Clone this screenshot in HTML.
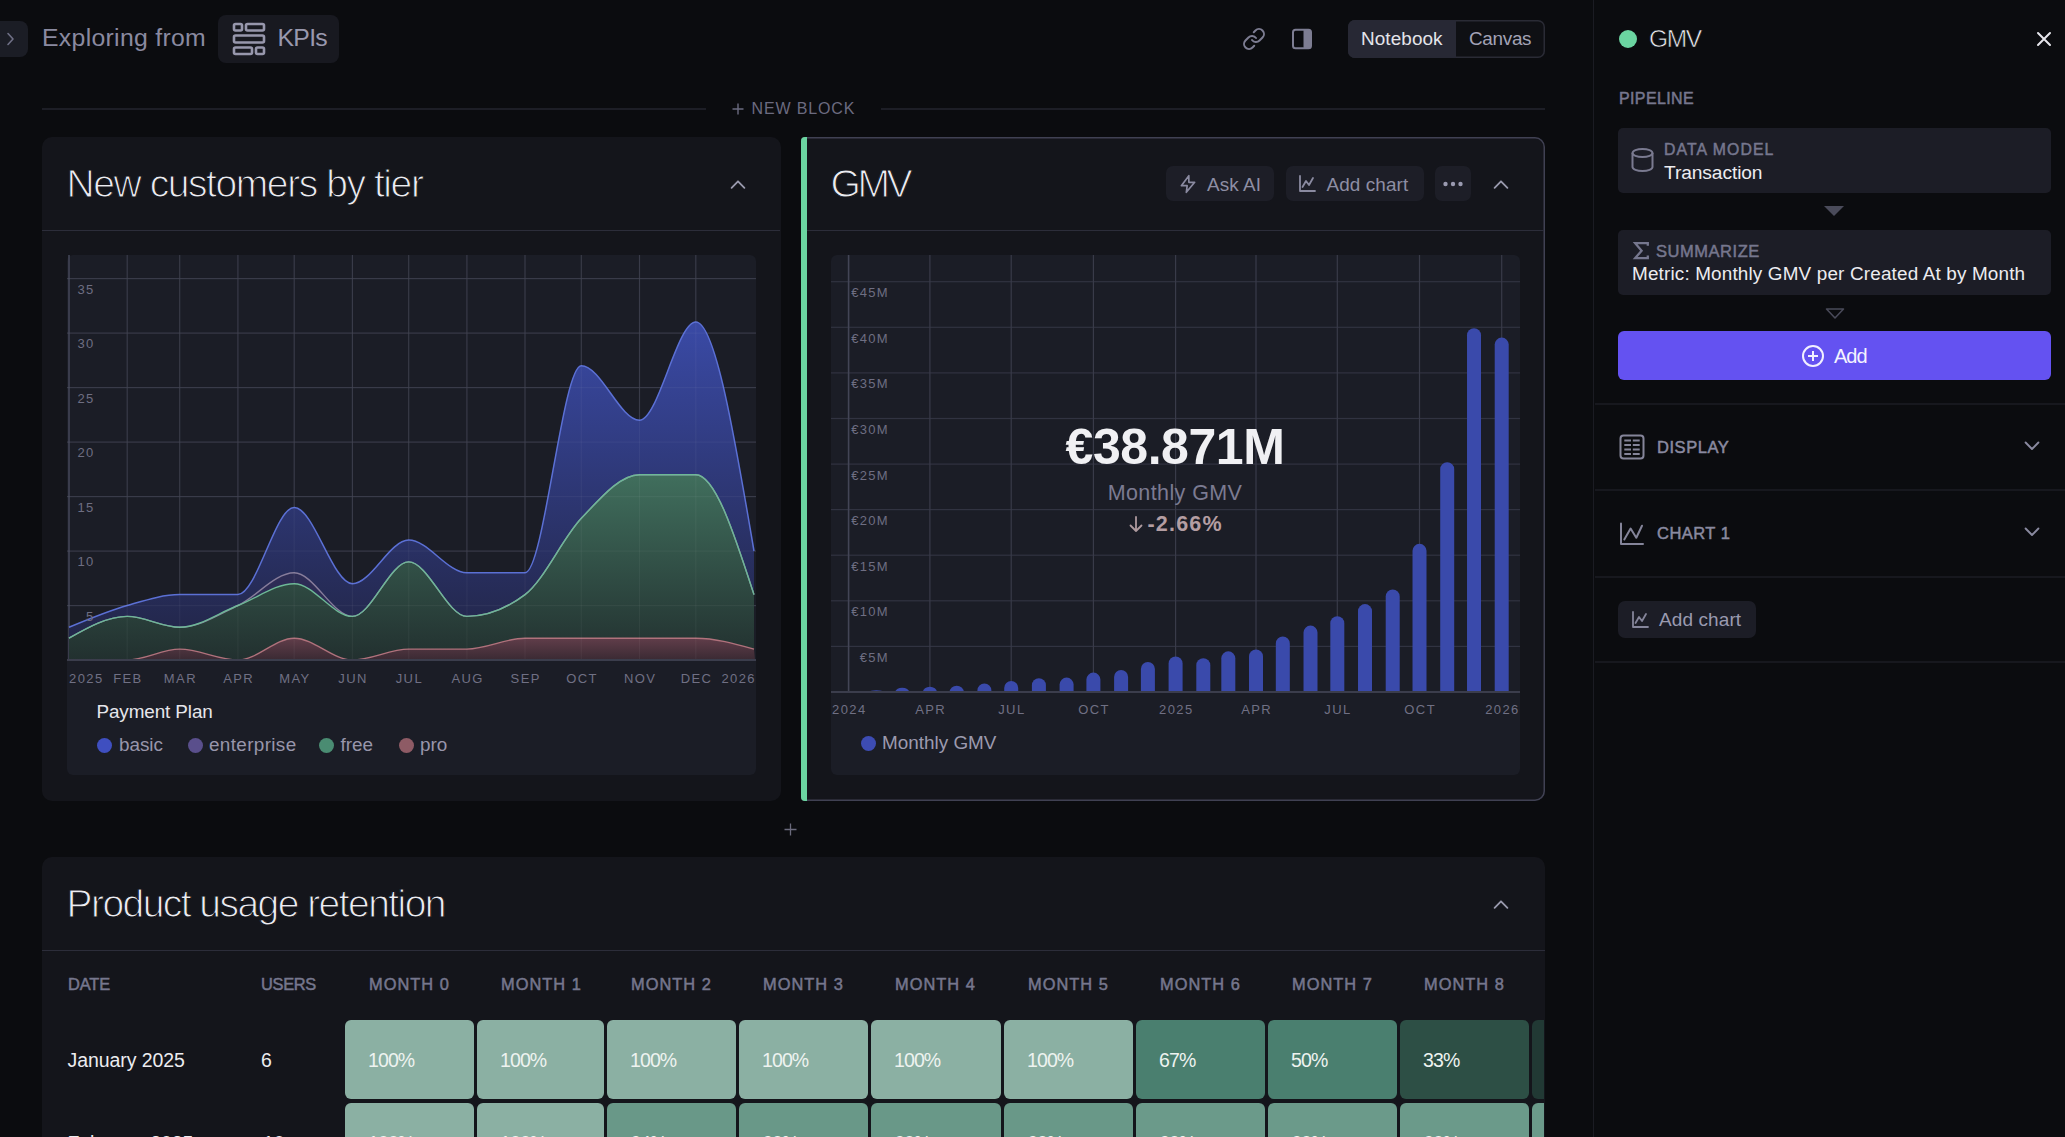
<!DOCTYPE html>
<html><head><meta charset="utf-8"><style>
html,body{margin:0;padding:0;}
body{width:2065px;height:1137px;overflow:hidden;background:#0b0c0f;position:relative;font-family:"Liberation Sans", sans-serif;}
.t{position:absolute;white-space:nowrap;line-height:1;}
.r{position:absolute;}
</style></head><body>
<div class="r" style="left:0px;top:21px;width:28px;height:36px;background:#1b1d25;border-radius:0 8px 8px 0;"></div>
<svg class="r" style="left:2px;top:30px" width="16" height="18" viewBox="0 0 16 18"><path d="M6 3.5 L11 9 L6 14.5" fill="none" stroke="#6f7086" stroke-width="1.6" stroke-linecap="round" stroke-linejoin="round"/></svg>
<div class="t" style="left:42.0px;top:26.1px;font-size:24.8px;color:#8a8aa0;letter-spacing:0.3px;">Exploring from</div>
<div class="r" style="left:218px;top:15px;width:121px;height:48px;background:#181920;border-radius:8px;"></div>
<svg class="r" style="left:231px;top:21px" width="36" height="36" viewBox="0 0 36 36" fill="none" stroke="#9797ac" stroke-width="2.6"><rect x="3" y="3" width="8" height="6.5" rx="1.5"/><rect x="15" y="3" width="18" height="6.5" rx="1.5"/><rect x="3" y="14.5" width="30" height="7" rx="1.5"/><rect x="3" y="26.5" width="18" height="6.5" rx="1.5"/><rect x="25" y="26.5" width="8" height="6.5" rx="1.5"/></svg>
<div class="t" style="left:277.5px;top:26.1px;font-size:24.8px;color:#9898ae;letter-spacing:-0.7px;">KPIs</div>
<svg class="r" style="left:1242px;top:27px" width="24" height="24" viewBox="0 0 24 24" fill="none" stroke="#7d7d92" stroke-width="2" stroke-linecap="round" stroke-linejoin="round"><path d="M10 13a5 5 0 0 0 7.54.54l3-3a5 5 0 0 0-7.07-7.07l-1.72 1.71"/><path d="M14 11a5 5 0 0 0-7.54-.54l-3 3a5 5 0 0 0 7.07 7.07l1.71-1.71"/></svg>
<svg class="r" style="left:1291px;top:28px" width="22" height="22" viewBox="0 0 22 22"><rect x="2" y="1.8" width="18" height="18.4" rx="2.5" fill="none" stroke="#7d7d92" stroke-width="2"/><rect x="12.5" y="1.8" width="7.5" height="18.4" rx="1" fill="#7d7d92"/></svg>
<div class="r" style="left:1348px;top:20px;width:197px;height:38px;background:#0f1014;border-radius:7px;box-shadow:inset 0 0 0 1.5px #2a2b35;"></div>
<div class="r" style="left:1348px;top:20px;width:108px;height:38px;background:#272834;border-radius:7px 0 0 7px;"></div>
<div class="t" style="left:1361.0px;top:30.0px;font-size:18.9px;color:#e4e4ea;letter-spacing:0.1px;">Notebook</div>
<div class="t" style="left:1469.0px;top:30.0px;font-size:18.9px;color:#a3a3b6;letter-spacing:-0.3px;">Canvas</div>
<div class="r" style="left:42px;top:108px;width:664px;height:2px;background:#1d1e26;border-radius:0;"></div>
<div class="r" style="left:881px;top:108px;width:664px;height:2px;background:#1d1e26;border-radius:0;"></div>
<svg class="r" style="left:732px;top:103px" width="12" height="12" viewBox="0 0 12 12"><path d="M6 0.5 V11.5 M0.5 6 H11.5" stroke="#6b6b80" stroke-width="1.4"/></svg>
<div class="t" style="left:751.5px;top:100.5px;font-size:16.0px;color:#6b6b80;letter-spacing:0.85px;">NEW BLOCK</div>
<div class="r" style="left:42px;top:137px;width:739px;height:664px;background:#14151b;border-radius:10px;"></div>
<div class="r" style="left:42px;top:229.5px;width:738px;height:1.5px;background:#2c2d3a;border-radius:0;"></div>
<div class="t" style="left:66.5px;top:163.8px;font-size:39.0px;color:#ececf1;letter-spacing:-1.42px;-webkit-text-stroke:1.1px #14151b;">New customers by tier</div>
<svg class="r" style="left:728px;top:176px" width="20" height="16" viewBox="0 0 20 16"><path d="M3.6 11.8 L10 5.3 L16.4 11.8" fill="none" stroke="#9a9aae" stroke-width="1.8" stroke-linecap="round" stroke-linejoin="round"/></svg>
<div class="r" style="left:67px;top:255px;width:689px;height:520px;background:#1b1d26;border-radius:6px;"></div>
<svg class="r" style="left:0;top:0" width="800" height="800"><defs><linearGradient id="gb" gradientUnits="userSpaceOnUse" x1="0" y1="320" x2="0" y2="660"><stop offset="0" stop-color="#3a4aa6"/><stop offset="1" stop-color="#212443"/></linearGradient><linearGradient id="gg" gradientUnits="userSpaceOnUse" x1="0" y1="470" x2="0" y2="660"><stop offset="0" stop-color="#41705e"/><stop offset="1" stop-color="#22302f"/></linearGradient><linearGradient id="gr" gradientUnits="userSpaceOnUse" x1="0" y1="635" x2="0" y2="660"><stop offset="0" stop-color="#66404d"/><stop offset="1" stop-color="#3a2a33"/></linearGradient></defs><rect x="67" y="605.0" width="689" height="1.2" fill="#313341"/><rect x="67" y="550.5" width="689" height="1.2" fill="#313341"/><rect x="67" y="496.0" width="689" height="1.2" fill="#313341"/><rect x="67" y="441.5" width="689" height="1.2" fill="#313341"/><rect x="67" y="387.0" width="689" height="1.2" fill="#313341"/><rect x="67" y="332.5" width="689" height="1.2" fill="#313341"/><rect x="67" y="278.0" width="689" height="1.2" fill="#313341"/><rect x="126.6" y="255" width="1.2" height="405" fill="#313341"/><rect x="179.1" y="255" width="1.2" height="405" fill="#313341"/><rect x="237.3" y="255" width="1.2" height="405" fill="#313341"/><rect x="293.6" y="255" width="1.2" height="405" fill="#313341"/><rect x="351.8" y="255" width="1.2" height="405" fill="#313341"/><rect x="408.1" y="255" width="1.2" height="405" fill="#313341"/><rect x="466.3" y="255" width="1.2" height="405" fill="#313341"/><rect x="524.4" y="255" width="1.2" height="405" fill="#313341"/><rect x="580.7" y="255" width="1.2" height="405" fill="#313341"/><rect x="638.9" y="255" width="1.2" height="405" fill="#313341"/><rect x="695.2" y="255" width="1.2" height="405" fill="#313341"/><rect x="68.2" y="255" width="1.6" height="405" fill="#434556"/><path d="M69.00,627.30C88.39,619.18 107.79,611.06 127.18,605.50C144.69,600.48 162.21,594.60 179.73,594.60C199.12,594.60 218.51,594.60 237.90,594.60C256.67,594.60 275.44,507.40 294.21,507.40C313.60,507.40 332.99,583.70 352.38,583.70C371.15,583.70 389.92,540.10 408.68,540.10C428.08,540.10 447.47,572.80 466.86,572.80C486.26,572.80 505.65,572.80 525.04,572.80C543.81,572.80 562.58,365.70 581.34,365.70C600.74,365.70 620.13,420.20 639.52,420.20C658.29,420.20 677.05,322.10 695.82,322.10C715.21,322.10 734.61,436.55 754.00,551.00L754.00,594.60C734.61,534.65 715.21,474.70 695.82,474.70C677.05,474.70 658.29,474.70 639.52,474.70C620.13,474.70 600.74,497.80 581.34,518.30C562.58,538.14 543.81,580.54 525.04,594.60C505.65,609.13 486.26,616.40 466.86,616.40C447.47,616.40 428.08,561.90 408.68,561.90C389.92,561.90 371.15,616.40 352.38,616.40C332.99,616.40 313.60,572.80 294.21,572.80C275.44,572.80 256.67,596.50 237.90,605.50C218.51,614.80 199.12,627.30 179.73,627.30C162.21,627.30 144.69,616.40 127.18,616.40C107.79,616.40 88.39,627.30 69.00,638.20Z" fill="url(#gb)"/><path d="M69.00,638.20C88.39,627.30 107.79,616.40 127.18,616.40C144.69,616.40 162.21,627.30 179.73,627.30C199.12,627.30 218.51,614.80 237.90,605.50C256.67,596.50 275.44,572.80 294.21,572.80C313.60,572.80 332.99,616.40 352.38,616.40C371.15,616.40 389.92,561.90 408.68,561.90C428.08,561.90 447.47,616.40 466.86,616.40C486.26,616.40 505.65,609.13 525.04,594.60C543.81,580.54 562.58,538.14 581.34,518.30C600.74,497.80 620.13,474.70 639.52,474.70C658.29,474.70 677.05,474.70 695.82,474.70C715.21,474.70 734.61,534.65 754.00,594.60L754.00,594.60C734.61,534.65 715.21,474.70 695.82,474.70C677.05,474.70 658.29,474.70 639.52,474.70C620.13,474.70 600.74,497.80 581.34,518.30C562.58,538.14 543.81,580.54 525.04,594.60C505.65,609.13 486.26,616.40 466.86,616.40C447.47,616.40 428.08,561.90 408.68,561.90C389.92,561.90 371.15,616.40 352.38,616.40C332.99,616.40 313.60,583.70 294.21,583.70C275.44,583.70 256.67,598.35 237.90,605.50C218.51,612.89 199.12,627.30 179.73,627.30C162.21,627.30 144.69,616.40 127.18,616.40C107.79,616.40 88.39,627.30 69.00,638.20Z" fill="#34336a" opacity="0.7"/><path d="M69.00,638.20C88.39,627.30 107.79,616.40 127.18,616.40C144.69,616.40 162.21,627.30 179.73,627.30C199.12,627.30 218.51,612.89 237.90,605.50C256.67,598.35 275.44,583.70 294.21,583.70C313.60,583.70 332.99,616.40 352.38,616.40C371.15,616.40 389.92,561.90 408.68,561.90C428.08,561.90 447.47,616.40 466.86,616.40C486.26,616.40 505.65,609.13 525.04,594.60C543.81,580.54 562.58,538.14 581.34,518.30C600.74,497.80 620.13,474.70 639.52,474.70C658.29,474.70 677.05,474.70 695.82,474.70C715.21,474.70 734.61,534.65 754.00,594.60L754.00,649.10C734.61,643.65 715.21,638.20 695.82,638.20C677.05,638.20 658.29,638.20 639.52,638.20C620.13,638.20 600.74,638.20 581.34,638.20C562.58,638.20 543.81,638.20 525.04,638.20C505.65,638.20 486.26,649.10 466.86,649.10C447.47,649.10 428.08,649.10 408.68,649.10C389.92,649.10 371.15,660.00 352.38,660.00C332.99,660.00 313.60,638.20 294.21,638.20C275.44,638.20 256.67,660.00 237.90,660.00C218.51,660.00 199.12,649.10 179.73,649.10C162.21,649.10 144.69,660.00 127.18,660.00C107.79,660.00 88.39,660.00 69.00,660.00Z" fill="url(#gg)"/><path d="M69.00,660.00C88.39,660.00 107.79,660.00 127.18,660.00C144.69,660.00 162.21,649.10 179.73,649.10C199.12,649.10 218.51,660.00 237.90,660.00C256.67,660.00 275.44,638.20 294.21,638.20C313.60,638.20 332.99,660.00 352.38,660.00C371.15,660.00 389.92,649.10 408.68,649.10C428.08,649.10 447.47,649.10 466.86,649.10C486.26,649.10 505.65,638.20 525.04,638.20C543.81,638.20 562.58,638.20 581.34,638.20C600.74,638.20 620.13,638.20 639.52,638.20C658.29,638.20 677.05,638.20 695.82,638.20C715.21,638.20 734.61,643.65 754.00,649.10L755,660L69,660Z" fill="url(#gr)"/><path d="M69.00,638.20C88.39,627.30 107.79,616.40 127.18,616.40C144.69,616.40 162.21,627.30 179.73,627.30C199.12,627.30 218.51,614.80 237.90,605.50C256.67,596.50 275.44,572.80 294.21,572.80C313.60,572.80 332.99,616.40 352.38,616.40C371.15,616.40 389.92,561.90 408.68,561.90C428.08,561.90 447.47,616.40 466.86,616.40C486.26,616.40 505.65,609.13 525.04,594.60C543.81,580.54 562.58,538.14 581.34,518.30C600.74,497.80 620.13,474.70 639.52,474.70C658.29,474.70 677.05,474.70 695.82,474.70C715.21,474.70 734.61,534.65 754.00,594.60" fill="none" stroke="#877d9b" stroke-width="1.4"/><path d="M69.00,660.00C88.39,660.00 107.79,660.00 127.18,660.00C144.69,660.00 162.21,649.10 179.73,649.10C199.12,649.10 218.51,660.00 237.90,660.00C256.67,660.00 275.44,638.20 294.21,638.20C313.60,638.20 332.99,660.00 352.38,660.00C371.15,660.00 389.92,649.10 408.68,649.10C428.08,649.10 447.47,649.10 466.86,649.10C486.26,649.10 505.65,638.20 525.04,638.20C543.81,638.20 562.58,638.20 581.34,638.20C600.74,638.20 620.13,638.20 639.52,638.20C658.29,638.20 677.05,638.20 695.82,638.20C715.21,638.20 734.61,643.65 754.00,649.10" fill="none" stroke="#b0727c" stroke-width="1.4"/><path d="M69.00,638.20C88.39,627.30 107.79,616.40 127.18,616.40C144.69,616.40 162.21,627.30 179.73,627.30C199.12,627.30 218.51,612.89 237.90,605.50C256.67,598.35 275.44,583.70 294.21,583.70C313.60,583.70 332.99,616.40 352.38,616.40C371.15,616.40 389.92,561.90 408.68,561.90C428.08,561.90 447.47,616.40 466.86,616.40C486.26,616.40 505.65,609.13 525.04,594.60C543.81,580.54 562.58,538.14 581.34,518.30C600.74,497.80 620.13,474.70 639.52,474.70C658.29,474.70 677.05,474.70 695.82,474.70C715.21,474.70 734.61,534.65 754.00,594.60" fill="none" stroke="#6db897" stroke-width="1.4"/><path d="M69.00,627.30C88.39,619.18 107.79,611.06 127.18,605.50C144.69,600.48 162.21,594.60 179.73,594.60C199.12,594.60 218.51,594.60 237.90,594.60C256.67,594.60 275.44,507.40 294.21,507.40C313.60,507.40 332.99,583.70 352.38,583.70C371.15,583.70 389.92,540.10 408.68,540.10C428.08,540.10 447.47,572.80 466.86,572.80C486.26,572.80 505.65,572.80 525.04,572.80C543.81,572.80 562.58,365.70 581.34,365.70C600.74,365.70 620.13,420.20 639.52,420.20C658.29,420.20 677.05,322.10 695.82,322.10C715.21,322.10 734.61,436.55 754.00,551.00" fill="none" stroke="#5b70d4" stroke-width="1.5"/><rect x="67" y="605.0" width="689" height="1.2" fill="#ffffff" opacity="0.045"/><rect x="67" y="550.5" width="689" height="1.2" fill="#ffffff" opacity="0.045"/><rect x="67" y="496.0" width="689" height="1.2" fill="#ffffff" opacity="0.045"/><rect x="67" y="441.5" width="689" height="1.2" fill="#ffffff" opacity="0.045"/><rect x="67" y="387.0" width="689" height="1.2" fill="#ffffff" opacity="0.045"/><rect x="67" y="332.5" width="689" height="1.2" fill="#ffffff" opacity="0.045"/><rect x="67" y="278.0" width="689" height="1.2" fill="#ffffff" opacity="0.045"/><rect x="126.6" y="255" width="1.2" height="405" fill="#ffffff" opacity="0.045"/><rect x="179.1" y="255" width="1.2" height="405" fill="#ffffff" opacity="0.045"/><rect x="237.3" y="255" width="1.2" height="405" fill="#ffffff" opacity="0.045"/><rect x="293.6" y="255" width="1.2" height="405" fill="#ffffff" opacity="0.045"/><rect x="351.8" y="255" width="1.2" height="405" fill="#ffffff" opacity="0.045"/><rect x="408.1" y="255" width="1.2" height="405" fill="#ffffff" opacity="0.045"/><rect x="466.3" y="255" width="1.2" height="405" fill="#ffffff" opacity="0.045"/><rect x="524.4" y="255" width="1.2" height="405" fill="#ffffff" opacity="0.045"/><rect x="580.7" y="255" width="1.2" height="405" fill="#ffffff" opacity="0.045"/><rect x="638.9" y="255" width="1.2" height="405" fill="#ffffff" opacity="0.045"/><rect x="695.2" y="255" width="1.2" height="405" fill="#ffffff" opacity="0.045"/><rect x="67" y="659" width="689" height="2" fill="#3b3d4c"/></svg>
<div class="t" style="left:-505.5px;width:600px;text-align:right;top:609.9px;font-size:13.0px;color:#6e6e82;letter-spacing:1.3px;">5</div>
<div class="t" style="left:-505.5px;width:600px;text-align:right;top:555.4px;font-size:13.0px;color:#6e6e82;letter-spacing:1.3px;">10</div>
<div class="t" style="left:-505.5px;width:600px;text-align:right;top:500.9px;font-size:13.0px;color:#6e6e82;letter-spacing:1.3px;">15</div>
<div class="t" style="left:-505.5px;width:600px;text-align:right;top:446.4px;font-size:13.0px;color:#6e6e82;letter-spacing:1.3px;">20</div>
<div class="t" style="left:-505.5px;width:600px;text-align:right;top:391.9px;font-size:13.0px;color:#6e6e82;letter-spacing:1.3px;">25</div>
<div class="t" style="left:-505.5px;width:600px;text-align:right;top:337.4px;font-size:13.0px;color:#6e6e82;letter-spacing:1.3px;">30</div>
<div class="t" style="left:-505.5px;width:600px;text-align:right;top:282.9px;font-size:13.0px;color:#6e6e82;letter-spacing:1.3px;">35</div>
<div class="t" style="left:69.0px;top:671.9px;font-size:13.0px;color:#707084;letter-spacing:1.4px;">2025</div>
<div class="t" style="left:-172.1px;width:600px;text-align:center;top:671.9px;font-size:13.0px;color:#707084;letter-spacing:1.4px;">FEB</div>
<div class="t" style="left:-119.6px;width:600px;text-align:center;top:671.9px;font-size:13.0px;color:#707084;letter-spacing:1.4px;">MAR</div>
<div class="t" style="left:-61.4px;width:600px;text-align:center;top:671.9px;font-size:13.0px;color:#707084;letter-spacing:1.4px;">APR</div>
<div class="t" style="left:-5.1px;width:600px;text-align:center;top:671.9px;font-size:13.0px;color:#707084;letter-spacing:1.4px;">MAY</div>
<div class="t" style="left:53.1px;width:600px;text-align:center;top:671.9px;font-size:13.0px;color:#707084;letter-spacing:1.4px;">JUN</div>
<div class="t" style="left:109.4px;width:600px;text-align:center;top:671.9px;font-size:13.0px;color:#707084;letter-spacing:1.4px;">JUL</div>
<div class="t" style="left:167.6px;width:600px;text-align:center;top:671.9px;font-size:13.0px;color:#707084;letter-spacing:1.4px;">AUG</div>
<div class="t" style="left:225.7px;width:600px;text-align:center;top:671.9px;font-size:13.0px;color:#707084;letter-spacing:1.4px;">SEP</div>
<div class="t" style="left:282.0px;width:600px;text-align:center;top:671.9px;font-size:13.0px;color:#707084;letter-spacing:1.4px;">OCT</div>
<div class="t" style="left:340.2px;width:600px;text-align:center;top:671.9px;font-size:13.0px;color:#707084;letter-spacing:1.4px;">NOV</div>
<div class="t" style="left:396.5px;width:600px;text-align:center;top:671.9px;font-size:13.0px;color:#707084;letter-spacing:1.4px;">DEC</div>
<div class="t" style="left:156.0px;width:600px;text-align:right;top:671.9px;font-size:13.0px;color:#707084;letter-spacing:1.4px;">2026</div>
<div class="t" style="left:96.5px;top:703.0px;font-size:18.9px;color:#e6e6ec;letter-spacing:-0.12px;">Payment Plan</div>
<div class="r" style="left:97.3px;top:738px;width:15px;height:15px;border-radius:50%;background:#3f4fc0"></div>
<div class="t" style="left:119.0px;top:735.5px;font-size:18.9px;color:#9896ab;letter-spacing:-0.05px;">basic</div>
<div class="r" style="left:188.0px;top:738px;width:15px;height:15px;border-radius:50%;background:#5a4f8c"></div>
<div class="t" style="left:209.0px;top:735.5px;font-size:18.9px;color:#9896ab;letter-spacing:0.35px;">enterprise</div>
<div class="r" style="left:319.3px;top:738px;width:15px;height:15px;border-radius:50%;background:#4a8c72"></div>
<div class="t" style="left:340.5px;top:735.5px;font-size:18.9px;color:#9896ab;letter-spacing:-0.05px;">free</div>
<div class="r" style="left:398.6px;top:738px;width:15px;height:15px;border-radius:50%;background:#8e5b65"></div>
<div class="t" style="left:420.0px;top:735.5px;font-size:18.9px;color:#9896ab;letter-spacing:-0.05px;">pro</div>
<div class="r" style="left:801px;top:137px;width:744px;height:664px;background:#14151b;border-radius:4px 10px 10px 4px;box-shadow:inset 0 0 0 1.5px #404153;"></div>
<div class="r" style="left:801px;top:136.5px;width:6px;height:664.5px;background:#6bd5a1;border-radius:4px 0 0 4px;"></div>
<div class="r" style="left:807px;top:229.5px;width:737px;height:1.5px;background:#2c2d3a;border-radius:0;"></div>
<div class="t" style="left:830.5px;top:163.8px;font-size:39.0px;color:#ececf1;letter-spacing:-3.4px;-webkit-text-stroke:1.1px #14151b;">GMV</div>
<div class="r" style="left:1166px;top:166px;width:108px;height:35px;background:#1d1e27;border-radius:7px;"></div>
<svg class="r" style="left:1178px;top:174px" width="20" height="20" viewBox="0 0 24 24" fill="none" stroke="#8a8aa0" stroke-width="2" stroke-linejoin="round"><path d="M13 2 L4 14 H11 L10 22 L20 10 H13 Z"/></svg>
<div class="t" style="left:1207.0px;top:175.5px;font-size:18.9px;color:#8e8ea4;letter-spacing:0.1px;">Ask AI</div>
<div class="r" style="left:1286px;top:166px;width:138px;height:35px;background:#1d1e27;border-radius:7px;"></div>
<svg class="r" style="left:1298px;top:175px" width="19" height="18" viewBox="0 0 19 18" fill="none" stroke="#8a8aa0" stroke-width="1.8" stroke-linejoin="round" stroke-linecap="round"><path d="M2 1 V16 H17"/><path d="M4.5 12 L8 6 L11 10 L15 3"/></svg>
<div class="t" style="left:1326.5px;top:175.5px;font-size:18.9px;color:#8e8ea4;letter-spacing:0.1px;">Add chart</div>
<div class="r" style="left:1435px;top:166px;width:36px;height:35px;background:#1d1e27;border-radius:7px;"></div>
<svg class="r" style="left:1441px;top:178px" width="24" height="12" viewBox="0 0 24 12" fill="#9a9ab0"><circle cx="4.5" cy="6" r="2.2"/><circle cx="12" cy="6" r="2.2"/><circle cx="19.5" cy="6" r="2.2"/></svg>
<svg class="r" style="left:1491px;top:176px" width="20" height="16" viewBox="0 0 20 16"><path d="M3.6 11.8 L10 5.3 L16.4 11.8" fill="none" stroke="#9a9aae" stroke-width="1.8" stroke-linecap="round" stroke-linejoin="round"/></svg>
<div class="r" style="left:831px;top:255px;width:689px;height:520px;background:#1b1d26;border-radius:6px;"></div>
<svg class="r" style="left:0;top:0" width="1560" height="800"><rect x="831" y="645.8" width="689" height="1.2" fill="#313341"/><rect x="831" y="600.2" width="689" height="1.2" fill="#313341"/><rect x="831" y="554.6" width="689" height="1.2" fill="#313341"/><rect x="831" y="509.0" width="689" height="1.2" fill="#313341"/><rect x="831" y="463.5" width="689" height="1.2" fill="#313341"/><rect x="831" y="417.9" width="689" height="1.2" fill="#313341"/><rect x="831" y="372.3" width="689" height="1.2" fill="#313341"/><rect x="831" y="326.7" width="689" height="1.2" fill="#313341"/><rect x="831" y="281.1" width="689" height="1.2" fill="#313341"/><rect x="929.3" y="255" width="1.2" height="437" fill="#393b49"/><rect x="1010.6" y="255" width="1.2" height="437" fill="#393b49"/><rect x="1092.8" y="255" width="1.2" height="437" fill="#393b49"/><rect x="1175.0" y="255" width="1.2" height="437" fill="#393b49"/><rect x="1255.4" y="255" width="1.2" height="437" fill="#393b49"/><rect x="1336.7" y="255" width="1.2" height="437" fill="#393b49"/><rect x="1418.9" y="255" width="1.2" height="437" fill="#393b49"/><rect x="1501.1" y="255" width="1.2" height="437" fill="#393b49"/><rect x="847.8" y="255" width="1.6" height="437" fill="#434556"/><path d="M869.30,692.0A7,1.82 0 0 1 883.30,692.0Z" fill="#3a4aab"/><path d="M895.21,692.0A7,4.29 0 0 1 909.21,692.0Z" fill="#3a4aab"/><path d="M922.90,692.0A7,5.29 0 0 1 936.90,692.0Z" fill="#3a4aab"/><path d="M949.71,692.0A7,6.29 0 0 1 963.71,692.0Z" fill="#3a4aab"/><path d="M977.40,692.0V690.43A7.0,7.0 0 0 1 991.40,690.43V692.0Z" fill="#3a4aab"/><path d="M1004.21,692.0V687.88A7.0,7.0 0 0 1 1018.21,687.88V692.0Z" fill="#3a4aab"/><path d="M1031.90,692.0V685.32A7.0,7.0 0 0 1 1045.90,685.32V692.0Z" fill="#3a4aab"/><path d="M1059.60,692.0V684.59A7.0,7.0 0 0 1 1073.60,684.59V692.0Z" fill="#3a4aab"/><path d="M1086.40,692.0V679.58A7.0,7.0 0 0 1 1100.40,679.58V692.0Z" fill="#3a4aab"/><path d="M1114.10,692.0V676.93A7.0,7.0 0 0 1 1128.10,676.93V692.0Z" fill="#3a4aab"/><path d="M1140.90,692.0V669.00A7.0,7.0 0 0 1 1154.90,669.00V692.0Z" fill="#3a4aab"/><path d="M1168.60,692.0V663.44A7.0,7.0 0 0 1 1182.60,663.44V692.0Z" fill="#3a4aab"/><path d="M1196.30,692.0V665.26A7.0,7.0 0 0 1 1210.30,665.26V692.0Z" fill="#3a4aab"/><path d="M1221.31,692.0V658.33A7.0,7.0 0 0 1 1235.31,658.33V692.0Z" fill="#3a4aab"/><path d="M1249.01,692.0V656.51A7.0,7.0 0 0 1 1263.01,656.51V692.0Z" fill="#3a4aab"/><path d="M1275.81,692.0V643.56A7.0,7.0 0 0 1 1289.81,643.56V692.0Z" fill="#3a4aab"/><path d="M1303.51,692.0V632.62A7.0,7.0 0 0 1 1317.51,632.62V692.0Z" fill="#3a4aab"/><path d="M1330.31,692.0V623.32A7.0,7.0 0 0 1 1344.31,623.32V692.0Z" fill="#3a4aab"/><path d="M1358.01,692.0V611.10A7.0,7.0 0 0 1 1372.01,611.10V692.0Z" fill="#3a4aab"/><path d="M1385.71,692.0V596.42A7.0,7.0 0 0 1 1399.71,596.42V692.0Z" fill="#3a4aab"/><path d="M1412.51,692.0V550.84A7.0,7.0 0 0 1 1426.51,550.84V692.0Z" fill="#3a4aab"/><path d="M1440.21,692.0V469.23A7.0,7.0 0 0 1 1454.21,469.23V692.0Z" fill="#3a4aab"/><path d="M1467.01,692.0V335.20A7.0,7.0 0 0 1 1481.01,335.20V692.0Z" fill="#3a4aab"/><path d="M1494.71,692.0V344.59A7.0,7.0 0 0 1 1508.71,344.59V692.0Z" fill="#3a4aab"/><rect x="831" y="691" width="689" height="2" fill="#3b3d4c"/></svg>
<div class="t" style="left:289.0px;width:600px;text-align:right;top:651.0px;font-size:13.0px;color:#6e6e82;letter-spacing:1.3px;">€5M</div>
<div class="t" style="left:289.0px;width:600px;text-align:right;top:605.4px;font-size:13.0px;color:#6e6e82;letter-spacing:1.3px;">€10M</div>
<div class="t" style="left:289.0px;width:600px;text-align:right;top:559.8px;font-size:13.0px;color:#6e6e82;letter-spacing:1.3px;">€15M</div>
<div class="t" style="left:289.0px;width:600px;text-align:right;top:514.2px;font-size:13.0px;color:#6e6e82;letter-spacing:1.3px;">€20M</div>
<div class="t" style="left:289.0px;width:600px;text-align:right;top:468.6px;font-size:13.0px;color:#6e6e82;letter-spacing:1.3px;">€25M</div>
<div class="t" style="left:289.0px;width:600px;text-align:right;top:423.0px;font-size:13.0px;color:#6e6e82;letter-spacing:1.3px;">€30M</div>
<div class="t" style="left:289.0px;width:600px;text-align:right;top:377.4px;font-size:13.0px;color:#6e6e82;letter-spacing:1.3px;">€35M</div>
<div class="t" style="left:289.0px;width:600px;text-align:right;top:331.8px;font-size:13.0px;color:#6e6e82;letter-spacing:1.3px;">€40M</div>
<div class="t" style="left:289.0px;width:600px;text-align:right;top:286.2px;font-size:13.0px;color:#6e6e82;letter-spacing:1.3px;">€45M</div>
<div class="t" style="left:549.3px;width:600px;text-align:center;top:702.9px;font-size:13.0px;color:#707084;letter-spacing:1.4px;">2024</div>
<div class="t" style="left:630.6px;width:600px;text-align:center;top:702.9px;font-size:13.0px;color:#707084;letter-spacing:1.4px;">APR</div>
<div class="t" style="left:711.9px;width:600px;text-align:center;top:702.9px;font-size:13.0px;color:#707084;letter-spacing:1.4px;">JUL</div>
<div class="t" style="left:794.1px;width:600px;text-align:center;top:702.9px;font-size:13.0px;color:#707084;letter-spacing:1.4px;">OCT</div>
<div class="t" style="left:876.3px;width:600px;text-align:center;top:702.9px;font-size:13.0px;color:#707084;letter-spacing:1.4px;">2025</div>
<div class="t" style="left:956.7px;width:600px;text-align:center;top:702.9px;font-size:13.0px;color:#707084;letter-spacing:1.4px;">APR</div>
<div class="t" style="left:1038.0px;width:600px;text-align:center;top:702.9px;font-size:13.0px;color:#707084;letter-spacing:1.4px;">JUL</div>
<div class="t" style="left:1120.2px;width:600px;text-align:center;top:702.9px;font-size:13.0px;color:#707084;letter-spacing:1.4px;">OCT</div>
<div class="t" style="left:1202.4px;width:600px;text-align:center;top:702.9px;font-size:13.0px;color:#707084;letter-spacing:1.4px;">2026</div>
<div class="t" style="left:875.0px;width:600px;text-align:center;top:421.6px;font-size:50.0px;color:#f0f0f3;font-weight:700;letter-spacing:-0.45px;">€38.871M</div>
<div class="t" style="left:875.0px;width:600px;text-align:center;top:482.8px;font-size:21.5px;color:#7b7b92;letter-spacing:0.4px;">Monthly GMV</div>
<svg class="r" style="left:1127px;top:515px" width="18" height="18" viewBox="0 0 18 18" fill="none" stroke="#ae9a9e" stroke-width="1.8" stroke-linecap="round" stroke-linejoin="round"><path d="M9 2 V16 M3.5 10.5 L9 16 L14.5 10.5"/></svg>
<div class="t" style="left:1147.5px;top:514.1px;font-size:21.5px;color:#b49ea2;font-weight:700;letter-spacing:1.2px;">-2.66%</div>
<div class="r" style="left:860.5px;top:736.3px;width:15px;height:15px;border-radius:50%;background:#3d4cb3"></div>
<div class="t" style="left:882.0px;top:734.0px;font-size:18.9px;color:#9c9aae;">Monthly GMV</div>
<svg class="r" style="left:783px;top:822px" width="15" height="15" viewBox="0 0 15 15"><path d="M7.5 1.5 V13.5 M1.5 7.5 H13.5" stroke="#6a6a7c" stroke-width="1.3"/></svg>
<div class="r" style="left:42px;top:857px;width:1503px;height:343px;background:#14151b;border-radius:10px;"></div>
<div class="r" style="left:42px;top:949.5px;width:1503px;height:1.5px;background:#2c2d3a;border-radius:0;"></div>
<div class="t" style="left:66.5px;top:883.8px;font-size:39.0px;color:#ececf1;letter-spacing:-1.55px;-webkit-text-stroke:1.1px #14151b;">Product usage retention</div>
<svg class="r" style="left:1491px;top:896px" width="20" height="16" viewBox="0 0 20 16"><path d="M3.6 11.8 L10 5.3 L16.4 11.8" fill="none" stroke="#9a9aae" stroke-width="1.8" stroke-linecap="round" stroke-linejoin="round"/></svg>
<div class="t" style="left:68.0px;top:976.4px;font-size:16.4px;color:#76778e;letter-spacing:-0.1px;-webkit-text-stroke:0.5px currentColor;">DATE</div>
<div class="t" style="left:261.0px;top:976.4px;font-size:16.4px;color:#76778e;letter-spacing:-0.3px;-webkit-text-stroke:0.5px currentColor;">USERS</div>
<div class="t" style="left:369.0px;top:976.4px;font-size:16.4px;color:#76778e;letter-spacing:1.0px;-webkit-text-stroke:0.5px currentColor;">MONTH 0</div>
<div class="t" style="left:501.0px;top:976.4px;font-size:16.4px;color:#76778e;letter-spacing:1.0px;-webkit-text-stroke:0.5px currentColor;">MONTH 1</div>
<div class="t" style="left:631.0px;top:976.4px;font-size:16.4px;color:#76778e;letter-spacing:1.0px;-webkit-text-stroke:0.5px currentColor;">MONTH 2</div>
<div class="t" style="left:763.0px;top:976.4px;font-size:16.4px;color:#76778e;letter-spacing:1.0px;-webkit-text-stroke:0.5px currentColor;">MONTH 3</div>
<div class="t" style="left:895.0px;top:976.4px;font-size:16.4px;color:#76778e;letter-spacing:1.0px;-webkit-text-stroke:0.5px currentColor;">MONTH 4</div>
<div class="t" style="left:1028.0px;top:976.4px;font-size:16.4px;color:#76778e;letter-spacing:1.0px;-webkit-text-stroke:0.5px currentColor;">MONTH 5</div>
<div class="t" style="left:1160.0px;top:976.4px;font-size:16.4px;color:#76778e;letter-spacing:1.0px;-webkit-text-stroke:0.5px currentColor;">MONTH 6</div>
<div class="t" style="left:1292.0px;top:976.4px;font-size:16.4px;color:#76778e;letter-spacing:1.0px;-webkit-text-stroke:0.5px currentColor;">MONTH 7</div>
<div class="t" style="left:1424.0px;top:976.4px;font-size:16.4px;color:#76778e;letter-spacing:1.0px;-webkit-text-stroke:0.5px currentColor;">MONTH 8</div>
<div class="t" style="left:67.5px;top:1050.9px;font-size:19.5px;color:#ececf0;letter-spacing:-0.08px;">January 2025</div>
<div class="t" style="left:261.0px;top:1050.9px;font-size:19.5px;color:#ececf0;">6</div>
<div class="r" style="left:345px;top:1020px;width:129px;height:79px;background:#8bb0a3;border-radius:6px;"></div>
<div class="r" style="left:345px;top:1103px;width:129px;height:79px;background:#8bb0a3;border-radius:6px;"></div>
<div class="t" style="left:368.0px;top:1050.9px;font-size:19.5px;color:#eef3f0;letter-spacing:-0.9px;">100%</div>
<div class="t" style="left:368.0px;top:1133.9px;font-size:19.5px;color:#eef3f0;letter-spacing:-0.9px;">100%</div>
<div class="r" style="left:477px;top:1020px;width:127px;height:79px;background:#8bb0a3;border-radius:6px;"></div>
<div class="r" style="left:477px;top:1103px;width:127px;height:79px;background:#8bb0a3;border-radius:6px;"></div>
<div class="t" style="left:500.0px;top:1050.9px;font-size:19.5px;color:#eef3f0;letter-spacing:-0.9px;">100%</div>
<div class="t" style="left:500.0px;top:1133.9px;font-size:19.5px;color:#eef3f0;letter-spacing:-0.9px;">100%</div>
<div class="r" style="left:607px;top:1020px;width:129px;height:79px;background:#8bb0a3;border-radius:6px;"></div>
<div class="r" style="left:607px;top:1103px;width:129px;height:79px;background:#699888;border-radius:6px;"></div>
<div class="t" style="left:630.0px;top:1050.9px;font-size:19.5px;color:#eef3f0;letter-spacing:-0.9px;">100%</div>
<div class="t" style="left:630.0px;top:1133.9px;font-size:19.5px;color:#eef3f0;letter-spacing:-0.9px;">64%</div>
<div class="r" style="left:739px;top:1020px;width:129px;height:79px;background:#8bb0a3;border-radius:6px;"></div>
<div class="r" style="left:739px;top:1103px;width:129px;height:79px;background:#699888;border-radius:6px;"></div>
<div class="t" style="left:762.0px;top:1050.9px;font-size:19.5px;color:#eef3f0;letter-spacing:-0.9px;">100%</div>
<div class="t" style="left:762.0px;top:1133.9px;font-size:19.5px;color:#eef3f0;letter-spacing:-0.9px;">60%</div>
<div class="r" style="left:871px;top:1020px;width:130px;height:79px;background:#8bb0a3;border-radius:6px;"></div>
<div class="r" style="left:871px;top:1103px;width:130px;height:79px;background:#699888;border-radius:6px;"></div>
<div class="t" style="left:894.0px;top:1050.9px;font-size:19.5px;color:#eef3f0;letter-spacing:-0.9px;">100%</div>
<div class="t" style="left:894.0px;top:1133.9px;font-size:19.5px;color:#eef3f0;letter-spacing:-0.9px;">60%</div>
<div class="r" style="left:1004px;top:1020px;width:129px;height:79px;background:#8bb0a3;border-radius:6px;"></div>
<div class="r" style="left:1004px;top:1103px;width:129px;height:79px;background:#699888;border-radius:6px;"></div>
<div class="t" style="left:1027.0px;top:1050.9px;font-size:19.5px;color:#eef3f0;letter-spacing:-0.9px;">100%</div>
<div class="t" style="left:1027.0px;top:1133.9px;font-size:19.5px;color:#eef3f0;letter-spacing:-0.9px;">60%</div>
<div class="r" style="left:1136px;top:1020px;width:129px;height:79px;background:#4a7f6f;border-radius:6px;"></div>
<div class="r" style="left:1136px;top:1103px;width:129px;height:79px;background:#6b9a8a;border-radius:6px;"></div>
<div class="t" style="left:1159.0px;top:1050.9px;font-size:19.5px;color:#eef3f0;letter-spacing:-0.9px;">67%</div>
<div class="t" style="left:1159.0px;top:1133.9px;font-size:19.5px;color:#eef3f0;letter-spacing:-0.9px;">60%</div>
<div class="r" style="left:1268px;top:1020px;width:129px;height:79px;background:#4a7f6f;border-radius:6px;"></div>
<div class="r" style="left:1268px;top:1103px;width:129px;height:79px;background:#6b9a8a;border-radius:6px;"></div>
<div class="t" style="left:1291.0px;top:1050.9px;font-size:19.5px;color:#eef3f0;letter-spacing:-0.9px;">50%</div>
<div class="t" style="left:1291.0px;top:1133.9px;font-size:19.5px;color:#eef3f0;letter-spacing:-0.9px;">60%</div>
<div class="r" style="left:1400px;top:1020px;width:129px;height:79px;background:#2d4f45;border-radius:6px;"></div>
<div class="r" style="left:1400px;top:1103px;width:129px;height:79px;background:#6b9a8a;border-radius:6px;"></div>
<div class="t" style="left:1423.0px;top:1050.9px;font-size:19.5px;color:#eef3f0;letter-spacing:-0.9px;">33%</div>
<div class="t" style="left:1423.0px;top:1133.9px;font-size:19.5px;color:#eef3f0;letter-spacing:-0.9px;">60%</div>
<div class="r" style="left:1532px;top:1020px;width:12px;height:79px;background:#213934;border-radius:6px 0 0 6px;"></div>
<div class="r" style="left:1532px;top:1103px;width:12px;height:79px;background:#6b9a8a;border-radius:6px 0 0 6px;"></div>
<div class="t" style="left:67.5px;top:1133.9px;font-size:19.5px;color:#ececf0;letter-spacing:-0.08px;">February 2025</div>
<div class="t" style="left:263.0px;top:1133.9px;font-size:19.5px;color:#ececf0;">10</div>
<div class="r" style="left:1593px;top:0px;width:1px;height:1137px;background:#1b1c23;border-radius:0;"></div>
<div class="r" style="left:1618.5px;top:30px;width:18px;height:18px;border-radius:50%;background:#6bd5a1"></div>
<div class="t" style="left:1649.0px;top:27.1px;font-size:24.5px;color:#ececf1;letter-spacing:-1.3px;-webkit-text-stroke:0.6px #0b0c0f;">GMV</div>
<svg class="r" style="left:2034px;top:29px" width="20" height="20" viewBox="0 0 20 20"><path d="M4 4 L16 16 M16 4 L4 16" stroke="#e6e6ec" stroke-width="2" stroke-linecap="round"/></svg>
<div class="t" style="left:1619.0px;top:90.7px;font-size:16.0px;color:#76778e;letter-spacing:0.37px;-webkit-text-stroke:0.5px currentColor;">PIPELINE</div>
<div class="r" style="left:1618px;top:127.5px;width:433px;height:65.5px;background:#1c1d26;border-radius:5px;"></div>
<svg class="r" style="left:1630px;top:147px" width="25" height="26" viewBox="0 0 25 26" fill="none" stroke="#7a7a90" stroke-width="2"><ellipse cx="12.5" cy="6" rx="10" ry="4"/><path d="M2.5 6 V20 A10 4 0 0 0 22.5 20 V6"/></svg>
<div class="t" style="left:1664.0px;top:141.5px;font-size:15.8px;color:#76778e;letter-spacing:1.1px;-webkit-text-stroke:0.5px currentColor;">DATA MODEL</div>
<div class="t" style="left:1664.0px;top:162.5px;font-size:19.2px;color:#ececf0;letter-spacing:-0.1px;">Transaction</div>
<svg class="r" style="left:1823px;top:205px" width="22" height="12" viewBox="0 0 22 12"><path d="M1 1 H21 L11 11 Z" fill="#4a4b5a"/></svg>
<div class="r" style="left:1618px;top:230px;width:433px;height:65px;background:#1c1d26;border-radius:5px;"></div>
<svg class="r" style="left:1632px;top:241px" width="18" height="19" viewBox="0 0 18 19" fill="none" stroke="#76778e" stroke-width="2.3" stroke-linejoin="miter"><path d="M15.8 4.8 V2.2 H3.2 L9.6 9.7 L3.2 17.1 H15.8 V14.5"/></svg>
<div class="t" style="left:1656.0px;top:242.9px;font-size:16.5px;color:#76778e;letter-spacing:0.54px;-webkit-text-stroke:0.5px currentColor;">SUMMARIZE</div>
<div class="t" style="left:1632.0px;top:265.0px;font-size:18.9px;color:#ececf0;letter-spacing:0.16px;">Metric: Monthly GMV per Created At by Month</div>
<svg class="r" style="left:1825px;top:308px" width="20" height="11" viewBox="0 0 20 11"><path d="M1.5 1 H18.5 L10 10 Z" fill="none" stroke="#4a4b5a" stroke-width="1.5" stroke-linejoin="round"/></svg>
<div class="r" style="left:1618px;top:331px;width:433px;height:49px;background:#6452f1;border-radius:6px;"></div>
<svg class="r" style="left:1801px;top:344px" width="24" height="24" viewBox="0 0 24 24" fill="none" stroke="#f2f0ff" stroke-width="2"><circle cx="12" cy="12" r="10"/><path d="M12 7 V17 M7 12 H17"/></svg>
<div class="t" style="left:1834.0px;top:345.8px;font-size:20.0px;color:#f4f3ff;letter-spacing:-1.0px;">Add</div>
<div class="r" style="left:1595px;top:403px;width:470px;height:2px;background:#17181e;border-radius:0;"></div>
<svg class="r" style="left:1619px;top:434px" width="26" height="26" viewBox="0 0 26 26" fill="none" stroke="#85859a" stroke-width="2"><rect x="1.5" y="1.5" width="23" height="23" rx="3"/><path d="M5.3 6.5 H12 M13.8 6.5 H20.7 M5.3 11 H12 M13.8 11 H20.7 M5.3 15.5 H12 M13.8 15.5 H20.7 M5.3 20 H12 M13.8 20 H20.7"/></svg>
<div class="t" style="left:1657.0px;top:438.9px;font-size:16.5px;color:#8a8aa0;letter-spacing:0.55px;-webkit-text-stroke:0.5px currentColor;">DISPLAY</div>
<svg class="r" style="left:2022px;top:438px" width="20" height="16" viewBox="0 0 20 16"><path d="M3.6 4.5 L10 11 L16.4 4.5" fill="none" stroke="#8a8aa0" stroke-width="1.9" stroke-linecap="round" stroke-linejoin="round"/></svg>
<div class="r" style="left:1595px;top:489px;width:470px;height:2px;background:#17181e;border-radius:0;"></div>
<svg class="r" style="left:1619px;top:522px" width="26" height="24" viewBox="0 0 26 24" fill="none" stroke="#85859a" stroke-width="2" stroke-linejoin="round" stroke-linecap="round"><path d="M2 1.5 V22 H24"/><path d="M5.3 17.4 L11.6 6.5 L17.3 15.7 L23 3.7"/></svg>
<div class="t" style="left:1657.0px;top:525.4px;font-size:16.5px;color:#8a8aa0;letter-spacing:0.47px;-webkit-text-stroke:0.5px currentColor;">CHART 1</div>
<svg class="r" style="left:2022px;top:524px" width="20" height="16" viewBox="0 0 20 16"><path d="M3.6 4.5 L10 11 L16.4 4.5" fill="none" stroke="#8a8aa0" stroke-width="1.9" stroke-linecap="round" stroke-linejoin="round"/></svg>
<div class="r" style="left:1595px;top:576px;width:470px;height:2px;background:#17181e;border-radius:0;"></div>
<div class="r" style="left:1618px;top:601px;width:138px;height:37px;background:#1c1d26;border-radius:7px;"></div>
<svg class="r" style="left:1631px;top:611px" width="19" height="18" viewBox="0 0 19 18" fill="none" stroke="#85859a" stroke-width="1.8" stroke-linejoin="round" stroke-linecap="round"><path d="M2 1 V16 H17"/><path d="M4.5 12 L8 6 L11 10 L15 3"/></svg>
<div class="t" style="left:1659.0px;top:610.0px;font-size:19.0px;color:#9a9ab0;letter-spacing:0.1px;">Add chart</div>
<div class="r" style="left:1595px;top:661px;width:470px;height:2px;background:#17181e;border-radius:0;"></div>

</body></html>
